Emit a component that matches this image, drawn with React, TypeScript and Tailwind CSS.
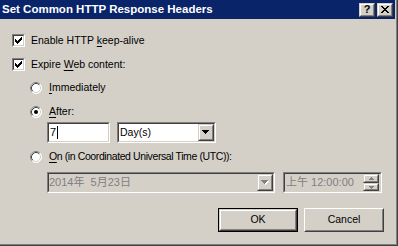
import React from 'react';

const face = "font-['Liberation_Sans','Noto_Sans_CJK_SC',sans-serif]";

function Sunken({ className, inner, children }: { className: string; inner: string; children?: React.ReactNode }) {
  return (
    <div className={`border border-t-[#808080] border-l-[#808080] border-r-white border-b-white ${className}`}>
      <div className={`w-full h-full border border-t-[#404040] border-l-[#404040] border-r-[#d4d0c8] border-b-[#d4d0c8] ${inner}`}>
        {children}
      </div>
    </div>
  );
}

function Raised({ className, children }: { className: string; children?: React.ReactNode }) {
  return (
    <div className={`border border-t-[#d4d0c8] border-l-[#d4d0c8] border-r-[#404040] border-b-[#404040] bg-[#d4d0c8] ${className}`}>
      <div className="w-full h-full border border-t-white border-l-white border-r-[#808080] border-b-[#808080] flex items-center justify-center">
        {children}
      </div>
    </div>
  );
}

function Check() {
  return (
    <Sunken className="w-[13px] h-[13px] shrink-0" inner="bg-white flex items-center justify-center">
      <svg width="7" height="7" viewBox="0 0 7 7" shapeRendering="crispEdges">
        <path d="M0 2h1v3H0z M1 3h1v3H1z M2 4h1v3H2z M3 3h1v3H3z M4 2h1v3H4z M5 1h1v3H5z M6 0h1v3H6z" fill="#000" />
      </svg>
    </Sunken>
  );
}

function Radio({ on }: { on?: boolean }) {
  return (
    <svg width="12" height="12" viewBox="0 0 12 12" className="shrink-0">
      <circle cx="6" cy="6" r="5.5" fill="#fff" />
      <path d="M2.11 9.89 A5.5 5.5 0 0 1 9.89 2.11" stroke="#808080" fill="none" />
      <path d="M9.89 2.11 A5.5 5.5 0 0 1 2.11 9.89" stroke="#fff" fill="none" />
      <path d="M2.82 9.18 A4.5 4.5 0 0 1 9.18 2.82" stroke="#404040" fill="none" />
      <path d="M9.18 2.82 A4.5 4.5 0 0 1 2.82 9.18" stroke="#d4d0c8" fill="none" />
      {on && <circle cx="6" cy="6" r="2" fill="#000" />}
    </svg>
  );
}

function Arrow({ gray }: { gray?: boolean }) {
  return (
    <svg width="8" height="5" viewBox="0 0 8 5" shapeRendering="crispEdges">
      {gray && <path d="M1 1h7v1H1z M2 2h5v1H2z M3 3h3v1H3z M4 4h1v1H4z" fill="#fff" />}
      <path d="M0 0h7v1H0z M1 1h5v1H1z M2 2h3v1H2z M3 3h1v1H3z" fill={gray ? '#808080' : '#000'} />
    </svg>
  );
}

function U({ children }: { children: React.ReactNode }) {
  return <span className="underline underline-offset-2">{children}</span>;
}

export default function App() {
  return (
    <div className={`w-[398px] h-[246px] bg-[#d4d0c8] ${face} text-[10.5px] text-black overflow-hidden border-r border-b border-[#404040]`}>
      <div className="h-full border-r border-b border-[#808080] flex flex-col">
        {/* caption */}
        <div className="h-[19px] mr-[1px] bg-[#0a246a] flex items-center justify-between pl-[2px] pr-[2px]">
          <span className="text-white font-bold text-[11.5px] leading-none">Set Common HTTP Response Headers</span>
          <div className="flex gap-[2px]">
            <Raised className="w-[16px] h-[14px]">
              <span className="font-bold text-[11px] leading-none">?</span>
            </Raised>
            <Raised className="w-[16px] h-[14px]">
              <svg width="8" height="7" viewBox="0 0 8 7" shapeRendering="crispEdges">
                <path d="M0 0h2v1H0z M1 1h2v1H1z M2 2h2v1H2z M3 3h2v1H3z M2 4h2v1H2z M1 5h2v1H1z M0 6h2v1H0z M6 0h2v1H6z M5 1h2v1H5z M4 2h2v1H4z M4 4h2v1H4z M5 5h2v1H5z M6 6h2v1H6z" fill="#000" />
              </svg>
            </Raised>
          </div>
        </div>

        <div className="flex flex-col pt-[15px] pl-[12px]">
          <div className="flex items-center gap-[6px] h-[13px]">
            <Check />
            <span>Enable HTTP <U>k</U>eep-alive</span>
          </div>
          <div className="flex items-center gap-[6px] h-[13px] mt-[11px]">
            <Check />
            <span>Expire <U>W</U>eb content:</span>
          </div>

          <div className="pl-[18px] flex flex-col">
            <div className="flex items-center gap-[7px] h-[12px] mt-[11px]">
              <Radio />
              <span><U>I</U>mmediately</span>
            </div>
            <div className="flex items-center gap-[7px] h-[12px] mt-[12px]">
              <Radio on />
              <span><U>A</U>fter:</span>
            </div>
            <div className="flex gap-[7px] mt-[4px] pl-[17px]">
              <Sunken className="w-[63px] h-[21px]" inner="bg-white flex items-center pl-[1px]">
                <span className="text-[11px]">7</span>
                <span className="w-[1px] h-[13px] bg-black ml-[1px]" />
              </Sunken>
              <Sunken className="w-[99px] h-[21px]" inner="bg-white flex items-center justify-between pl-[1px]">
                <span>Day(s)</span>
                <Raised className="w-[16px] h-[17px]">
                  <Arrow />
                </Raised>
              </Sunken>
            </div>
            <div className="flex items-center gap-[7px] h-[12px] mt-[8px]">
              <Radio />
              <span className="tracking-[-0.4px]"><U>O</U>n (in Coordinated Universal Time (UTC)):</span>
            </div>
            <div className="flex gap-[8px] mt-[9px] pl-[17px]">
              <Sunken className="w-[228px] h-[21px]" inner="bg-[#d4d0c8] flex items-center justify-between text-[#808080]">
                <span className="text-[11px]">2014年&nbsp;&nbsp;5月23日</span>
                <Raised className="w-[16px] h-[17px]">
                  <Arrow gray />
                </Raised>
              </Sunken>
              <Sunken className="w-[99px] h-[21px]" inner="bg-[#d4d0c8] flex items-center justify-between text-[#808080] pl-[1px]">
                <span className="text-[11px]">上午 12:00:00</span>
                <div className="flex flex-col mr-[1px]">
                  <Raised className="w-[16px] h-[9px]">
                    <svg width="5" height="3" viewBox="0 0 5 3" shapeRendering="crispEdges">
                      <path d="M2 0h1v1H2z M1 1h3v1H1z M0 2h5v1H0z" fill="#808080" />
                    </svg>
                  </Raised>
                  <Raised className="w-[16px] h-[8px]">
                    <svg width="5" height="3" viewBox="0 0 5 3" shapeRendering="crispEdges">
                      <path d="M0 0h5v1H0z M1 1h3v1H1z M2 2h1v1H2z" fill="#808080" />
                    </svg>
                  </Raised>
                </div>
              </Sunken>
            </div>
          </div>

          <div className="flex justify-end gap-[6px] mt-[15px] pr-[12px]">
            <div className="w-[80px] h-[24px] border border-black">
              <Raised className="w-full h-full">
                <span>OK</span>
              </Raised>
            </div>
            <div className="w-[80px] h-[24px] border border-t-white border-l-white border-r-[#404040] border-b-[#404040]">
              <div className="w-full h-full border border-t-[#d4d0c8] border-l-[#d4d0c8] border-r-[#808080] border-b-[#808080] flex items-center justify-center">
                <span>Cancel</span>
              </div>
            </div>
          </div>
        </div>
      </div>
    </div>
  );
}
